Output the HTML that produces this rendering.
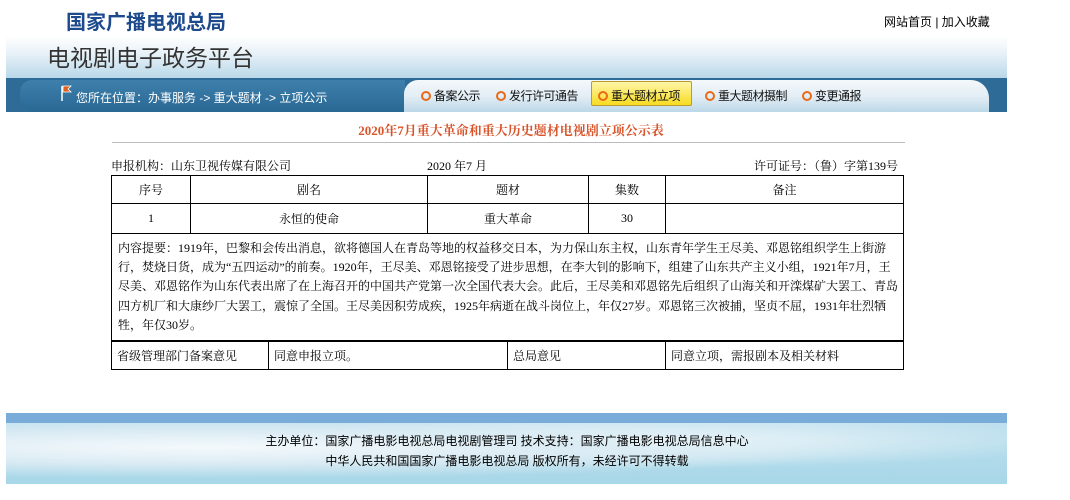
<!DOCTYPE html>
<html><head><meta charset="utf-8"><style>
*{margin:0;padding:0;box-sizing:border-box}
body{width:1070px;height:500px;background:#fff;font-family:"Liberation Serif","Noto Serif CJK SC",serif;font-size:12px;color:#000;position:relative;overflow:hidden}
.a{position:absolute;white-space:nowrap}
.sans{font-family:"Liberation Sans","Noto Sans CJK SC",sans-serif}
.band{position:absolute;left:6px;top:36px;width:1001px;height:42px;background:linear-gradient(#fff 0%,#e9f2f8 40%,#b9d8e9 100%)}
.nav{position:absolute;left:6px;top:78px;width:1001px;height:34px;background:#2e6b96}
.navr{position:absolute;left:404px;top:80px;width:585px;height:32px;background:linear-gradient(#f4f8fb,#e4eef5 50%,#bcd8e8);border-radius:14px 18px 0 0}
.navl{position:absolute;left:20px;top:80px;width:385px;height:32px;background:linear-gradient(#3e7fab,#2a6894);border-radius:12px 0 0 14px}
.ring{display:inline-block;width:10px;height:10px;border:2px solid #e86a1a;border-radius:50%;vertical-align:-1px;margin-right:3px}
.it{position:absolute;top:87px;font-size:12px;color:#111;letter-spacing:-0.5px}
table{position:absolute;border-collapse:collapse}
td{border:1px solid #000;font-size:12px}
</style></head><body>
<div class="a sans" style="left:66px;top:6px;font-size:20px;font-weight:bold;color:#1d4a8c">国家广播电视总局</div>
<div class="a sans" style="left:884px;top:13px;font-size:12px">网站首页 | 加入收藏</div>
<div class="band"></div>
<div class="a sans" style="left:47px;top:39px;font-size:23px;color:#333">电视剧电子政务平台</div>
<div class="nav"></div>
<div class="navl"></div>
<div class="navr"></div>
<svg class="a" style="left:60px;top:84px" width="14" height="18"><path d="M2 2v15" stroke="#fff" stroke-width="1.5"/><path d="M3 2h8l-3 3l3 3h-8z" fill="#e06020" stroke="#fff" stroke-width="0.8"/></svg>
<div class="a sans" style="left:76px;top:89px;color:#fff;font-size:12px">您所在位置：办事服务 -&gt; 重大题材 -&gt; 立项公示</div>
<div class="a" style="left:591px;top:81px;width:101px;height:25px;background:linear-gradient(#fff6a8,#f7dc20);border:1px solid #b99b36;border-radius:2px"></div>
<div class="it sans" style="left:421px"><span class="ring"></span>备案公示</div>
<div class="it sans" style="left:496px"><span class="ring"></span>发行许可通告</div>
<div class="it sans" style="left:598px"><span class="ring"></span>重大题材立项</div>
<div class="it sans" style="left:705px"><span class="ring"></span>重大题材摄制</div>
<div class="it sans" style="left:802px"><span class="ring"></span>变更通报</div>
<div class="a" style="left:0;top:120px;width:1070px;text-align:center;padding-right:48px;font-size:13px;font-weight:bold;color:#d9542a">2020年7月重大革命和重大历史题材电视剧立项公示表</div>
<div class="a" style="left:112px;top:142px;width:793px;height:1px;background:#bbb"></div>
<div class="a" style="left:111px;top:157px">申报机构：山东卫视传媒有限公司</div>
<div class="a" style="left:427px;top:157px">2020 年7 月</div>
<div class="a" style="left:754px;top:157px">许可证号：（鲁）字第139号</div>
<table style="left:111px;top:175px;width:793px">
<tr style="height:28px;text-align:center"><td style="width:79px">序号</td><td style="width:237px">剧名</td><td style="width:161px">题材</td><td style="width:77px">集数</td><td>备注</td></tr>
<tr style="height:30px;text-align:center"><td>1</td><td>永恒的使命</td><td>重大革命</td><td>30</td><td></td></tr>
</table>
<table style="left:111px;top:233px;width:793px">
<tr style="height:108px"><td style="padding:5px 1px 5px 6px;line-height:19.2px;vertical-align:top;white-space:normal">内容提要：1919年，巴黎和会传出消息，欲将德国人在青岛等地的权益移交日本，为力保山东主权，山东青年学生王尽美、邓恩铭组织学生上街游行，焚烧日货，成为“五四运动”的前奏。1920年，王尽美、邓恩铭接受了进步思想，在李大钊的影响下，组建了山东共产主义小组，1921年7月，王尽美、邓恩铭作为山东代表出席了在上海召开的中国共产党第一次全国代表大会。此后，王尽美和邓恩铭先后组织了山海关和开滦煤矿大罢工、青岛四方机厂和大康纱厂大罢工，震惊了全国。王尽美因积劳成疾，1925年病逝在战斗岗位上，年仅27岁。邓恩铭三次被捕，坚贞不屈，1931年壮烈牺牲，年仅30岁。</td></tr>
</table>
<table style="left:111px;top:340px;width:793px">
<tr style="height:29px"><td style="width:157px;padding-left:5px">省级管理部门备案意见</td><td style="width:239px;padding-left:5px">同意申报立项。</td><td style="width:158px;padding-left:5px">总局意见</td><td style="padding-left:5px">同意立项，需报剧本及相关材料</td></tr>
</table>
<div class="a" style="left:6px;top:413px;width:1001px;height:10px;background:#79acd9"></div>
<div class="a" style="left:6px;top:423px;width:1001px;height:61px;background:radial-gradient(ellipse at 20% 40%,#f4f9fc 0%,#dcecf4 30%,transparent 60%),radial-gradient(ellipse at 65% 30%,#eef6fa 0%,transparent 45%),linear-gradient(#bfe0ee,#a7d7e8)"></div>
<div class="a sans" style="left:0;width:1014px;text-align:center;top:432px;font-size:12px">主办单位：国家广播电影电视总局电视剧管理司 技术支持：国家广播电影电视总局信息中心</div>
<div class="a sans" style="left:0;width:1014px;text-align:center;top:452px;font-size:12px">中华人民共和国国家广播电影电视总局 版权所有，未经许可不得转载</div>
</body></html>
